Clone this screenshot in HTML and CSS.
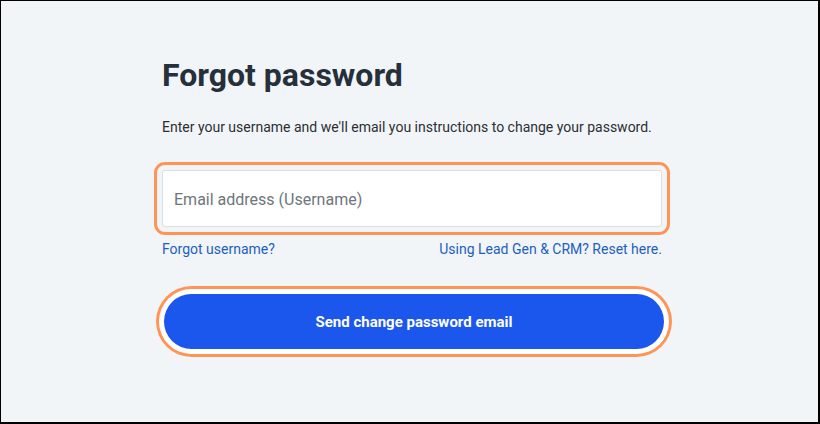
FILE: index.html
```html
<!DOCTYPE html>
<html lang="en">
<head>
  <meta charset="UTF-8" />
  <meta name="viewport" content="width=device-width, initial-scale=1.0"/>
  <title>Forgot password</title>
  <link rel="stylesheet" href="styles.css">
</head>
<body>
  <div class="frame">
    <div class="container">
      <h1>Forgot password</h1>
      <p class="intro">Enter your username and we'll email you instructions to change your password.</p>
      <form id="forgotForm">
        <input type="email" id="email" name="email" class="field" placeholder="Email address (Username)" />
        <div class="links">
          <a href="#">Forgot username?</a>
          <a href="#">Using Lead Gen &amp; CRM? Reset here.</a>
        </div>
        <button type="submit" class="send-btn">Send change password email</button>
      </form>
    </div>
  </div>
</body>
</html>
```

FILE: styles.css
```css
:root {
  --bg: #f2f5f8;
  --text: #25303b;
  --link: #1d5fbf;
  --accent: #1b57ec;
  --ring: #ff9457;
}

html, body {
  margin: 0;
  padding: 0;
}

body {
  font-family: Roboto, 'Liberation Sans', sans-serif;
  color: var(--text);
}

.frame {
  box-sizing: border-box;
  width: 820px;
  height: 424px;
  background: var(--bg);
  border: 1px solid #000;
  border-right-width: 2px;
  border-bottom-width: 2px;
  display: flex;
  justify-content: center;
}

.container {
  width: 500px;
  padding-top: 55px;
  margin-left: 5px;
}

h1 {
  margin: 0;
  font-size: 32px;
  line-height: 38px;
  font-weight: 700;
  color: var(--text);
}

.intro {
  margin: 23px 0 0;
  font-size: 14px;
  line-height: 20px;
  color: #2b2f33;
}

form {
  display: flex;
  flex-direction: column;
  margin-top: 33px;
}

.field {
  box-sizing: border-box;
  width: 100%;
  height: 57px;
  padding: 1px 11px 0;
  border: 1px solid #dcdfe3;
  border-radius: 3px;
  background: #fff;
  font-family: inherit;
  font-size: 16px;
  color: var(--text);
  outline: 3px solid var(--ring);
  outline-offset: 5px;
}

.field::placeholder {
  color: #6f757c;
}

.links {
  display: flex;
  justify-content: space-between;
  margin-top: 13px;
  font-size: 14px;
  line-height: 18px;
}

.links a {
  color: var(--link);
  text-decoration: none;
}

.send-btn {
  margin-top: 36px;
  margin-left: 2px;
  width: 500px;
  height: 55px;
  border: none;
  border-radius: 28px;
  background: var(--accent);
  color: #fff;
  font-family: inherit;
  font-size: 15px;
  font-weight: 700;
  cursor: pointer;
  box-shadow: 0 0 0 5px #fff, 0 0 0 8px var(--ring);
}
```
